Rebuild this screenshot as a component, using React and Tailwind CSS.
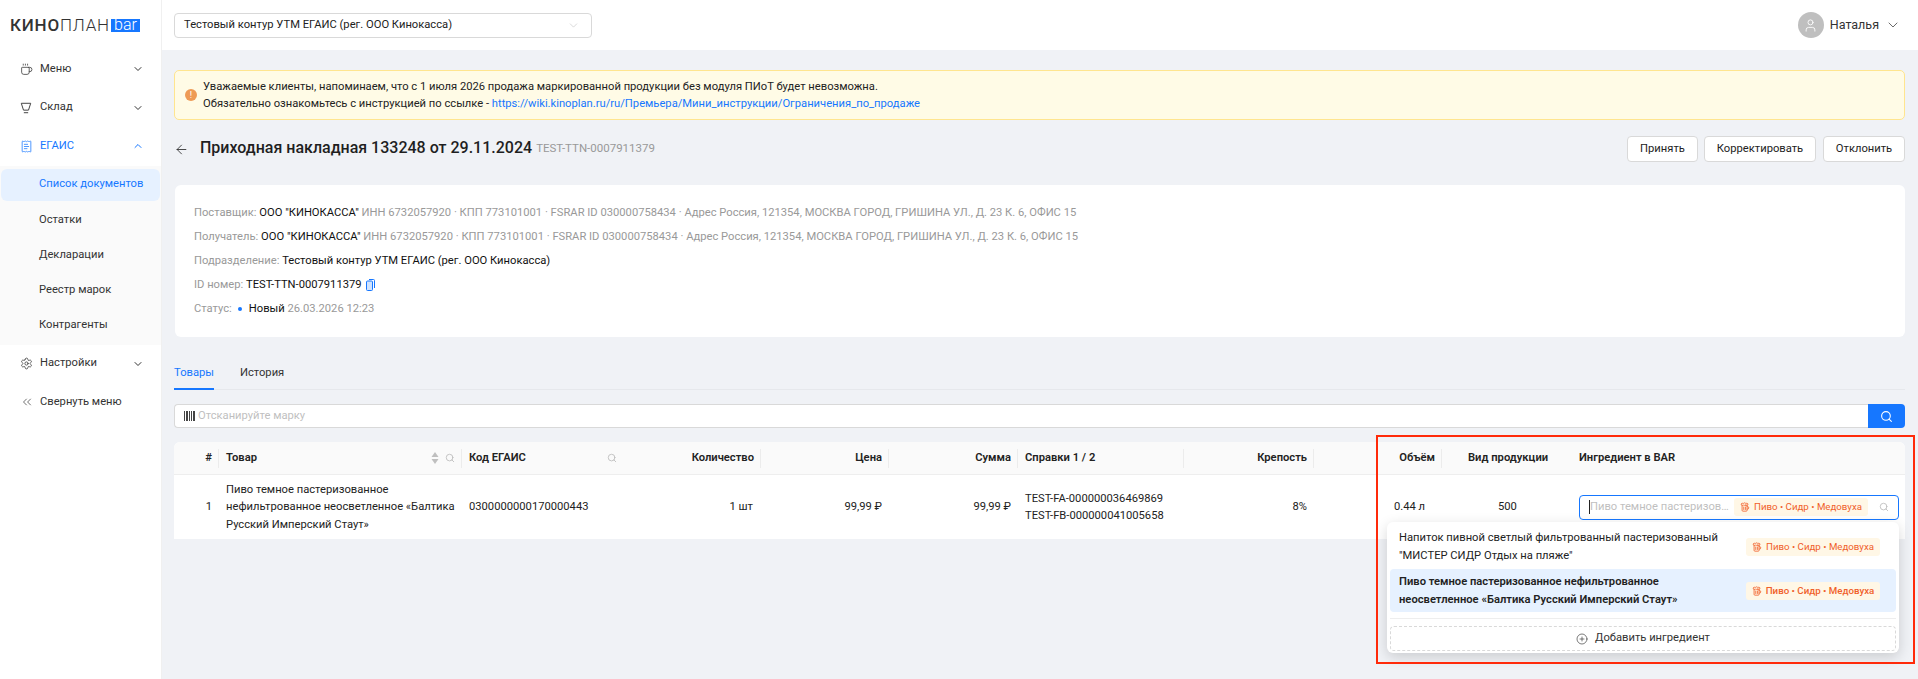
import React from "react";
import {
  ArrowLeft,
  Beer,
  ChevronDown,
  ChevronUp,
  ChevronsLeft,
  CirclePlus,
  Coffee,
  ReceiptText,
  Search,
  Settings,
  User,
} from "lucide-react";

const FunnelIcon = () => (
  <svg width="12" height="12" viewBox="0 0 14 14" fill="none" stroke="#3a3a3a" strokeWidth="1.1">
    <path d="M1.5 1.5h11l-2.6 8H4.1l-2.6-8z" />
    <path d="M4.5 12.5h5" />
  </svg>
);

const BarcodeIcon = () => (
  <svg width="11" height="10" viewBox="0 0 11 10" fill="#444">
    <rect x="0" y="0" width="1" height="10" />
    <rect x="2" y="0" width="2" height="10" />
    <rect x="5" y="0" width="1" height="10" />
    <rect x="7" y="0" width="1" height="10" />
    <rect x="9" y="0" width="2" height="10" />
  </svg>
);

const CopyIcon = () => (
  <svg width="9" height="12" viewBox="0 0 9 12" fill="none" stroke="#1677ff" strokeWidth="1">
    <rect x="0.5" y="2" width="6" height="9.5" rx="1" fill="#cfe3ff" />
    <path d="M3 .5h4.5a1 1 0 0 1 1 1V9" />
  </svg>
);

const SortIcon = () => (
  <svg width="8" height="12" viewBox="0 0 8 12" fill="#bfbfbf">
    <path d="M4 0l3.5 5H.5L4 0z" />
    <path d="M4 12L.5 7h7L4 12z" />
  </svg>
);

const Tag = ({ bold, className = "" }) => (
  <span
    className={`flex h-[18px] w-[134px] shrink-0 items-center justify-center gap-[4px] whitespace-nowrap rounded-[3px] bg-[#fff7e6] text-[9.7px] text-[#f0602a] ${
      bold ? "font-medium" : ""
    } ${className}`}
  >
    <Beer size={10} strokeWidth={2} />
    Пиво • Сидр • Медовуха
  </span>
);

const MenuItem = ({ icon, label, open, active }) => (
  <div
    className={`flex h-[38.5px] items-center pl-[20px] pr-[17px] ${active ? "text-[#1677ff]" : "text-[#333]"}`}
  >
    <span className="flex w-[20px] items-center">{icon}</span>
    <span className="flex-1">{label}</span>
    {open ? <ChevronUp size={12} /> : <ChevronDown size={12} />}
  </div>
);

const SubItem = ({ label }) => (
  <div className="flex h-[35px] items-center pl-[39px] text-[#333]">{label}</div>
);

const Sidebar = () => (
  <aside className="flex w-[162px] shrink-0 flex-col border-r border-[#f0f0f0] bg-white">
    <div className="flex h-[50px] items-center pl-[10px]">
      <span className="text-[17px] leading-none tracking-[0.8px] text-[#333]">
        <span className="font-medium">КИНО</span>
        <span className="font-light">ПЛАН</span>
      </span>
      <span className="ml-[1px] flex h-[13px] w-[29px] items-center justify-center bg-[#1677ff] text-[16px] font-light leading-none text-white">
        bar
      </span>
    </div>
    <div>
      <MenuItem icon={<Coffee size={13} strokeWidth={1.4} />} label="Меню" />
      <MenuItem icon={<FunnelIcon />} label="Склад" />
      <MenuItem icon={<ReceiptText size={13} strokeWidth={1.4} />} label="ЕГАИС" open active />
    </div>
    <div className="h-[179px] bg-[#fafafa] pt-[3px]">
      <div className="mx-[1px] mb-[2.5px] flex h-[32px] items-center rounded-md bg-[#e6f1ff] pl-[38px] text-[#1677ff]">
        Список документов
      </div>
      <SubItem label="Остатки" />
      <SubItem label="Декларации" />
      <SubItem label="Реестр марок" />
      <SubItem label="Контрагенты" />
    </div>
    <MenuItem icon={<Settings size={13} strokeWidth={1.4} />} label="Настройки" />
    <div className="flex h-[38px] items-center pl-[20px] text-[#333]">
      <span className="flex w-[20px] items-center">
        <ChevronsLeft size={14} strokeWidth={1.2} />
      </span>
      Свернуть меню
    </div>
  </aside>
);

const Topbar = () => (
  <header className="flex h-[50px] shrink-0 items-center justify-between bg-white pl-[12px] pr-[17px]">
    <div className="flex h-[25px] w-[418px] items-center justify-between rounded-[4px] border border-[#d9d9d9] pl-[9px] pr-[11px] text-[#222]">
      Тестовый контур УТМ ЕГАИС (рег. ООО Кинокасса)
      <ChevronDown size={13} strokeWidth={1} className="text-[#bbb]" />
    </div>
    <div className="flex items-center">
      <span className="flex h-[26px] w-[26px] items-center justify-center rounded-full bg-[#bfbfbf] text-white">
        <User size={15} strokeWidth={1.4} />
      </span>
      <span className="ml-[6px] text-[12.5px] text-[#333]">Наталья</span>
      <ChevronDown size={16} strokeWidth={1.1} className="ml-[6px] text-[#333]" />
    </div>
  </header>
);

const Banner = () => (
  <div className="mt-[20px] flex h-[50px] items-center rounded-[5px] border border-[#ffe58f] bg-[#fffbe6] pl-[10px] text-[#222]">
    <span className="flex h-[12px] w-[12px] items-center justify-center rounded-full bg-[#ee9a55] text-[9px] leading-none text-white">
      !
    </span>
    <div className="ml-[6px] leading-[17px]">
      <div>Уважаемые клиенты, напоминаем, что с 1 июля 2026 продажа маркированной продукции без модуля ПИоТ будет невозможна.</div>
      <div>
        Обязательно ознакомьтесь с инструкцией по ссылке -{" "}
        <a className="text-[#1677ff]">https://wiki.kinoplan.ru/ru/Премьера/Мини_инструкции/Ограничения_по_продаже</a>
      </div>
    </div>
  </div>
);

const TitleRow = () => (
  <div className="mt-[16px] flex h-[26px] items-center">
    <ArrowLeft size={15} strokeWidth={1.3} className="text-[#222]" />
    <h1 className="mb-[2px] ml-[11px] text-[16px] font-medium text-[#1f1f1f]">Приходная накладная 133248 от 29.11.2024</h1>
    <span className="ml-[4px] text-[11.5px] text-[#999]">TEST-TTN-0007911379</span>
    <div className="ml-auto flex">
      <button className="h-[26px] w-[71px] rounded-[4px] border border-[#d9d9d9] bg-white text-[#222]">Принять</button>
      <button className="ml-[6px] h-[26px] w-[112px] rounded-[4px] border border-[#d9d9d9] bg-white text-[#222]">Корректировать</button>
      <button className="ml-[7px] h-[26px] w-[82px] rounded-[4px] border border-[#d9d9d9] bg-white text-[#222]">Отклонить</button>
    </div>
  </div>
);

const Party = ({ label }) => (
  <div className="flex h-[24px] items-center whitespace-pre text-[#999]">
    {label}: <span className="text-[#111]">ООО "КИНОКАССА"</span> ИНН 6732057920 · КПП 773101001 · FSRAR ID 030000758434 · Адрес Россия, 121354, МОСКВА ГОРОД, ГРИШИНА УЛ., Д. 23 К. 6, ОФИС 15
  </div>
);

const InfoCard = () => (
  <div className="ml-[1px] mt-[23px] h-[152px] rounded-[6px] bg-white pl-[19px] pt-[16px]">
    <Party label="Поставщик" />
    <Party label="Получатель" />
    <div className="flex h-[24px] items-center whitespace-pre text-[#999]">
      Подразделение: <span className="text-[#111]">Тестовый контур УТМ ЕГАИС (рег. ООО Кинокасса)</span>
    </div>
    <div className="flex h-[24px] items-center whitespace-pre text-[#999]">
      ID номер: <span className="text-[#111]">TEST-TTN-0007911379</span>
      <span className="ml-[4px] flex"><CopyIcon /></span>
    </div>
    <div className="flex h-[24px] items-center whitespace-pre text-[#999]">
      Статус:
      <span className="ml-[6px] mr-[7px] h-[4px] w-[4px] rounded-full bg-[#1677ff]" />
      <span className="text-[#111]">Новый</span> 26.03.2026 12:23
    </div>
  </div>
);

const Tabs = () => (
  <div className="mt-[23px] flex h-[30px] gap-[26px] border-b border-[#e6e8ec]">
    <div className="h-[30px] w-[40px] border-b-2 border-[#1677ff] pt-[5px] text-[#1677ff]">Товары</div>
    <div className="pt-[5px] text-[#333]">История</div>
  </div>
);

const ScanInput = () => (
  <div className="mt-[14px] flex h-[24px]">
    <div className="flex flex-1 items-center gap-[3px] rounded-l-[4px] border border-r-0 border-[#d9d9d9] bg-white pl-[9px] text-[#bfbfbf]">
      <BarcodeIcon />
      Отсканируйте марку
    </div>
    <button className="flex w-[37px] items-center justify-center rounded-r-[4px] bg-[#1677ff] text-white">
      <Search size={13} strokeWidth={2} />
    </button>
  </div>
);

const columns =
  "grid grid-cols-[45px_243px_168px_131px_128px_129px_166px_130px_128px_133px_1fr]";

const Th = ({ children, align, line = true, className = "" }) => (
  <div
    className={`relative flex h-full items-center px-[7px] font-semibold text-[#222] ${
      align === "right" ? "justify-end" : ""
    } ${className}`}
  >
    {children}
    {line && <span className="absolute right-0 top-[7px] h-[19px] w-px bg-[#ececec]" />}
  </div>
);

const Table = () => (
  <div className="relative mt-[14px] rounded-t-[6px] bg-white">
    <div className={`${columns} h-[33px] items-center rounded-t-[6px] border-b border-[#eeeeee] bg-[#fafafa]`}>
      <Th align="right">#</Th>
      <Th>
        Товар
        <span className="ml-auto flex items-center gap-[6px]">
          <SortIcon />
          <Search size={10} className="text-[#bbb]" />
        </span>
      </Th>
      <Th line={false}>
        Код ЕГАИС
        <Search size={10} className="ml-auto mr-[6px] text-[#bbb]" />
      </Th>
      <Th align="right">Количество</Th>
      <Th align="right">Цена</Th>
      <Th align="right">Сумма</Th>
      <Th>Справки 1 / 2</Th>
      <Th align="right">Крепость</Th>
      <Th align="right">Объём</Th>
      <Th line={false} className="pl-[26px]">Вид продукции</Th>
      <Th line={false} className="pl-[4px]">Ингредиент в BAR</Th>
    </div>
    <div className={`${columns} h-[64px] items-center text-[#222]`}>
      <div className="pr-[7px] text-right">1</div>
      <div className="pl-[7px] pr-[4px] leading-[17.5px]">
        Пиво темное пастеризованное нефильтрованное неосветленное «Балтика Русский Имперский Стаут»
      </div>
      <div className="px-[7px]">0300000000170000443</div>
      <div className="pr-[8px] text-right">1 шт</div>
      <div className="pr-[7px] text-right">99,99 ₽</div>
      <div className="pr-[7px] text-right">99,99 ₽</div>
      <div className="px-[7px] leading-[17px]">
        TEST-FA-000000036469869
        <br />
        TEST-FB-000000041005658
      </div>
      <div className="pr-[7px] text-right">8%</div>
      <div className="pl-[80px]">0.44 л</div>
      <div className="pl-[56px]">500</div>
      <div className="pl-[4px] pr-[6px]">
        <div className="flex h-[25px] items-center rounded-[4px] border border-[#1677ff] bg-white pl-[9px] pr-[9px]">
          <span className="h-[14px] w-px shrink-0 bg-[#222]" />
          <span className="w-[141px] truncate text-[#bfbfbf]">Пиво темное пастеризованное</span>
          <Tag className="ml-[3px]" />
          <Search size={10} className="ml-auto text-[#bbb]" />
        </div>
      </div>
    </div>
    <Dropdown />
  </div>
);

const Dropdown = () => (
  <div className="absolute left-[1213px] top-[80px] z-10 h-[131px] w-[512px] rounded-[6px] bg-white px-[3px] pt-[3px] shadow-[0_4px_14px_rgba(0,0,0,0.16)]">
    <div className="flex h-[43px] items-center justify-between pl-[9px] pr-[16px] leading-[18px] text-[#222]">
      <div>
        Напиток пивной светлый фильтрованный пастеризованный
        <br />
        "МИСТЕР СИДР Отдых на пляже"
      </div>
      <Tag />
    </div>
    <div className="mt-[1px] flex h-[43px] items-center justify-between rounded-[4px] bg-[#e6f1ff] pl-[9px] pr-[16px] font-semibold leading-[17.5px] text-[#222]">
      <div>
        Пиво темное пастеризованное нефильтрованное
        <br />
        неосветленное «Балтика Русский Имперский Стаут»
      </div>
      <Tag bold />
    </div>
    <div className="mt-[6px] border-t border-[#eeeeee] pt-[7px]">
      <button className="flex h-[25px] w-full items-center justify-center gap-[7px] rounded-[4px] border border-dashed border-[#d9d9d9] text-[#333]">
        <CirclePlus size={12} strokeWidth={1.3} />
        Добавить ингредиент
      </button>
    </div>
  </div>
);

export default function App() {
  return (
    <div className="relative flex h-[679px] w-[1918px] overflow-hidden bg-[#f0f2f6] font-['Roboto',sans-serif] text-[11.2px]">
      <Sidebar />
      <main className="flex min-w-0 flex-1 flex-col">
        <Topbar />
        <div className="pl-[12px] pr-[13px]">
          <Banner />
          <TitleRow />
          <InfoCard />
          <Tabs />
          <ScanInput />
          <Table />
        </div>
      </main>
      {/* red annotation frame from the reference */}
      <div className="pointer-events-none absolute left-[1376px] top-[435px] z-20 h-[229px] w-[539px] border-2 border-[#ff2a0a]" />
    </div>
  );
}
